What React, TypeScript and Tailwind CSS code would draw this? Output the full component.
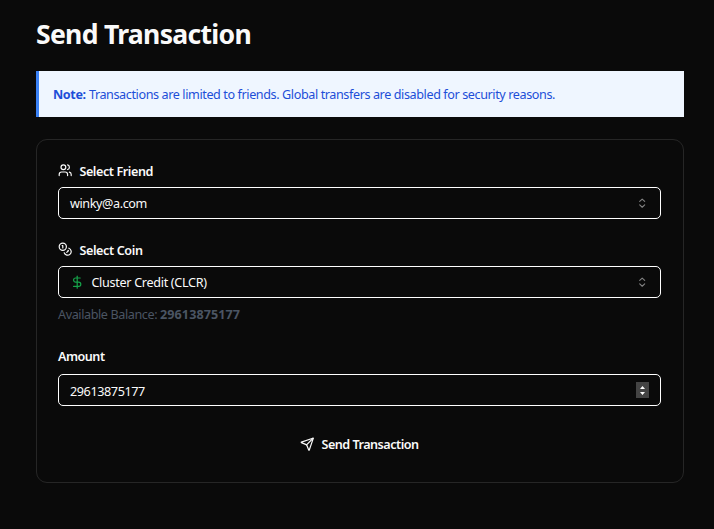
import type { ReactNode } from "react";
import { Coins, DollarSign, Send, Users } from "lucide-react";

function FieldLabel({ icon, children }: { icon?: ReactNode; children: ReactNode }) {
  return (
    <div className="flex h-5 items-center gap-[7px] font-semibold">
      {icon}
      {children}
    </div>
  );
}

function Box({ children }: { children: ReactNode }) {
  return (
    <div className="flex h-8 w-[603px] items-center rounded-[5px] border border-white px-[11px]">
      {children}
    </div>
  );
}

function CaretSort() {
  return (
    <svg
      viewBox="0 0 15 15"
      className="ml-auto size-[14.4px] fill-none stroke-current opacity-50"
      strokeLinecap="round"
      strokeLinejoin="round"
      strokeWidth="1.15"
    >
      <path d="M4.9 5.7 7.5 3.3l2.6 2.4M4.9 9.3l2.6 2.4 2.6-2.4" />
    </svg>
  );
}

export default function App() {
  return (
    <main className="h-[529px] w-[714px] overflow-hidden bg-[#0a0a0a] pt-[18px] pl-9 font-['Noto_Sans','Open_Sans',sans-serif] text-[12.6px] leading-[18px] text-[#fafafa]">
      <h1 className="h-8 text-[26.6px] leading-8 font-bold whitespace-nowrap">
        <span className="tracking-[-0.72px]">Send Transaction</span>
      </h1>

      <div className="mt-[21px] flex h-[46px] w-[648px] items-center border-l-[3px] border-[#3b82f6] bg-[#eff6ff] pt-[2px] pl-[14px] text-[#1d4ed8]">
        <p className="whitespace-nowrap">
          <strong className="font-bold tracking-[-0.4px]">Note:</strong>{" "}
          <span className="tracking-[-0.4px]">
            Transactions are limited to friends. Global transfers are disabled for security reasons.
          </span>
        </p>
      </div>

      <section className="mt-[22px] h-[344px] w-[648px] rounded-[11px] border border-[#262626] px-[21px] pt-[22px]">
        <FieldLabel icon={<Users className="mb-[4px] size-[14.4px]" />}>
          <span className="tracking-[-0.42px]">Select Friend</span>
        </FieldLabel>
        <div className="mt-[5px]">
          <Box>
            <span className="pt-[2px] tracking-[-0.4px]">winky@a.com</span>
            <CaretSort />
          </Box>
        </div>

        <div className="mt-[22px]">
          <FieldLabel icon={<Coins className="mb-[4px] size-[14.4px]" />}>
            <span className="tracking-[-0.38px]">Select Coin</span>
          </FieldLabel>
        </div>
        <div className="mt-[5px]">
          <Box>
            <DollarSign className="mr-[7px] size-[14.4px] text-[#16a34a]" />
            <span className="pt-[2px] tracking-[-0.3px]">Cluster Credit (CLCR)</span>
            <CaretSort />
          </Box>
        </div>
        <p className="mt-[8px] text-[#4b5563]">
          <span className="tracking-[-0.4px]">Available Balance: </span>
          <strong className="font-bold tracking-[0.08px]">29613875177</strong>
        </p>

        <div className="mt-[23px]">
          <FieldLabel>
            <span className="tracking-[-0.5px]">Amount</span>
          </FieldLabel>
        </div>
        <div className="mt-[7px]">
          <Box>
            <span className="pt-[3px] tracking-[-0.4px]">29613875177</span>
            <span className="ml-auto flex h-4 w-[13px] items-center justify-center bg-[#444]">
              <svg viewBox="0 0 13 16" className="h-4 w-[13px] fill-white">
                <path d="M4 7 6.5 4 9 7zM4 10h5L6.5 13z" />
              </svg>
            </span>
          </Box>
        </div>

        <div className="mt-[29px] flex h-[18px] items-center justify-center gap-[7px] pr-[1.4px] font-semibold">
          <Send className="size-[14.4px]" />
          <span className="pt-[2px] tracking-[-0.5px]">Send Transaction</span>
        </div>
      </section>
    </main>
  );
}
